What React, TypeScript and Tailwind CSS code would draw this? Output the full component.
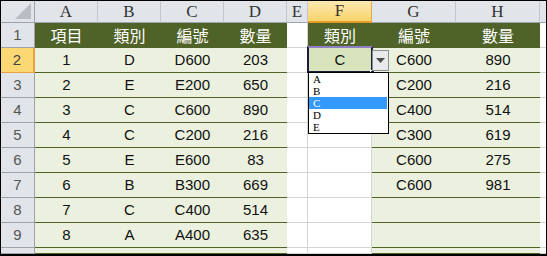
import React from 'react';

const OLIVE = 'bg-[#4f6228]';
const cols = ['A', 'B', 'C', 'D', 'E', 'F', 'G', 'H'];

const leftData: string[][] = [
  ['項目', '類別', '編號', '數量'],
  ['1', 'D', 'D600', '203'],
  ['2', 'E', 'E200', '650'],
  ['3', 'C', 'C600', '890'],
  ['4', 'C', 'C200', '216'],
  ['5', 'E', 'E600', '83'],
  ['6', 'B', 'B300', '669'],
  ['7', 'C', 'C400', '514'],
  ['8', 'A', 'A400', '635'],
  ['', '', '', ''],
];

const rightData: string[][] = [
  ['類別', '編號', '數量'],
  ['C', 'C600', '890'],
  ['', 'C200', '216'],
  ['', 'C400', '514'],
  ['', 'C300', '619'],
  ['', 'C600', '275'],
  ['', 'C600', '981'],
  ['', '', ''],
  ['', '', ''],
  ['', '', ''],
];

// one data cell in the green table area
const TableCell: React.FC<{ text: string; head: boolean }> = ({ text, head }) =>
  head ? (
    <div className={`${OLIVE} border-b border-[#4f6228] flex items-center justify-center text-white text-[16px] font-['Noto_Sans_CJK_TC',sans-serif]`}>
      {text}
    </div>
  ) : (
    <div className="bg-[#ebf1de] border-b border-[#4f6228] flex items-center justify-center text-[15px] text-[#111] font-['Liberation_Sans',Arial,sans-serif]">
      {text}
    </div>
  );

const BlankCell: React.FC = () => <div className="bg-white border-b border-r border-[#d4d4d4]" />;

const App: React.FC = () => {
  const rows = Array.from({ length: 10 }, (_, i) => i);

  return (
    <div className="relative w-[547px] h-[256px] overflow-hidden bg-white border-t border-l border-r border-b-2 border-black">
      <div className="grid grid-cols-[34px_63px_63px_63px_63px_21px_64px_84px_84px_6px] grid-rows-[22px_repeat(9,25px)_6px]">
        {/* corner */}
        <div className="bg-[#e1e4e8] border-r border-b border-[#9ea4ad] flex items-end justify-end pr-[3px] pb-[3px]">
          <svg width="16" height="16" viewBox="0 0 16 16">
            <polygon points="16,0 16,16 0,16" fill="#b9bdc3" />
          </svg>
        </div>
        {/* column headers */}
        {cols.map((c) =>
          c === 'F' ? (
            <div
              key={c}
              className="bg-gradient-to-b from-[#fce9b0] to-[#f8d46a] border-r border-[#e4a94f] border-b-2 border-b-[#e79a2e] flex items-center justify-center text-[17px] text-[#333] font-['Liberation_Serif',serif]"
            >
              {c}
            </div>
          ) : (
            <div
              key={c}
              className="bg-[#e1e4e8] border-r border-b border-r-[#c3c7cd] border-b-[#9ea4ad] flex items-center justify-center text-[17px] text-[#333] font-['Liberation_Serif',serif]"
            >
              {c}
            </div>
          )
        )}
        <div className="bg-[#e1e4e8] border-b border-[#9ea4ad]" />

        {rows.map((r) => (
          <React.Fragment key={r}>
            {/* row header */}
            {r === 1 ? (
              <div className="bg-[#fbd873] border-r-2 border-b border-[#e8a23a] flex items-center justify-center text-[15px] text-[#444] font-['Liberation_Sans',sans-serif]">
                {r + 1}
              </div>
            ) : (
              <div className="bg-[#e1e4e8] border-r border-b border-[#9ea4ad] flex items-center justify-center text-[15px] text-[#555] font-['Liberation_Sans',sans-serif] overflow-hidden">
                {r < 9 ? r + 1 : ''}
              </div>
            )}
            {leftData[r].map((t, i) => (
              <TableCell key={`l${i}`} text={t} head={r === 0} />
            ))}
            <BlankCell />
            {r === 0 ? (
              <TableCell text={rightData[r][0]} head />
            ) : r === 1 ? (
              <div className="bg-[#d8e4bc] flex items-center justify-center text-[15px] text-[#111] font-['Liberation_Sans',Arial,sans-serif]">
                C
              </div>
            ) : (
              <BlankCell />
            )}
            <TableCell text={rightData[r][1]} head={r === 0} />
            <TableCell text={rightData[r][2]} head={r === 0} />
            <div className="bg-white border-b border-[#d4d4d4]" />
          </React.Fragment>
        ))}
      </div>

      {/* active cell F2 */}
      <div className="absolute left-[306px] top-[45px] w-[66px] h-[27px] border-2 border-[#1d1b3a] border-t-[#8f80c4]">
        <div className="absolute right-[-4px] bottom-[-4px] w-[5px] h-[5px] bg-[#1d1b3a] border border-white" />
      </div>

      {/* dropdown arrow */}
      <div className="absolute left-[371px] top-[49px] w-[17px] h-[21px] bg-[#e9eaec] border border-[#8a8d92] flex items-center justify-center">
        <svg width="9" height="5" viewBox="0 0 9 5">
          <polygon points="0,0 9,0 4.5,5" fill="#4a4d52" />
        </svg>
      </div>

      {/* dropdown list */}
      <div className="absolute left-[307px] top-[71px] w-[81px] h-[62px] bg-white border border-black pr-[1px] font-['Liberation_Serif',serif] text-[11px] leading-[12px] text-black">
        {['A', 'B', 'C', 'D', 'E'].map((x) => (
          <div key={x} className={`h-[12px] pl-[4px] ${x === 'C' ? 'bg-[#3399ff] text-white' : ''}`}>
            {x}
          </div>
        ))}
      </div>
    </div>
  );
};

export default App;
